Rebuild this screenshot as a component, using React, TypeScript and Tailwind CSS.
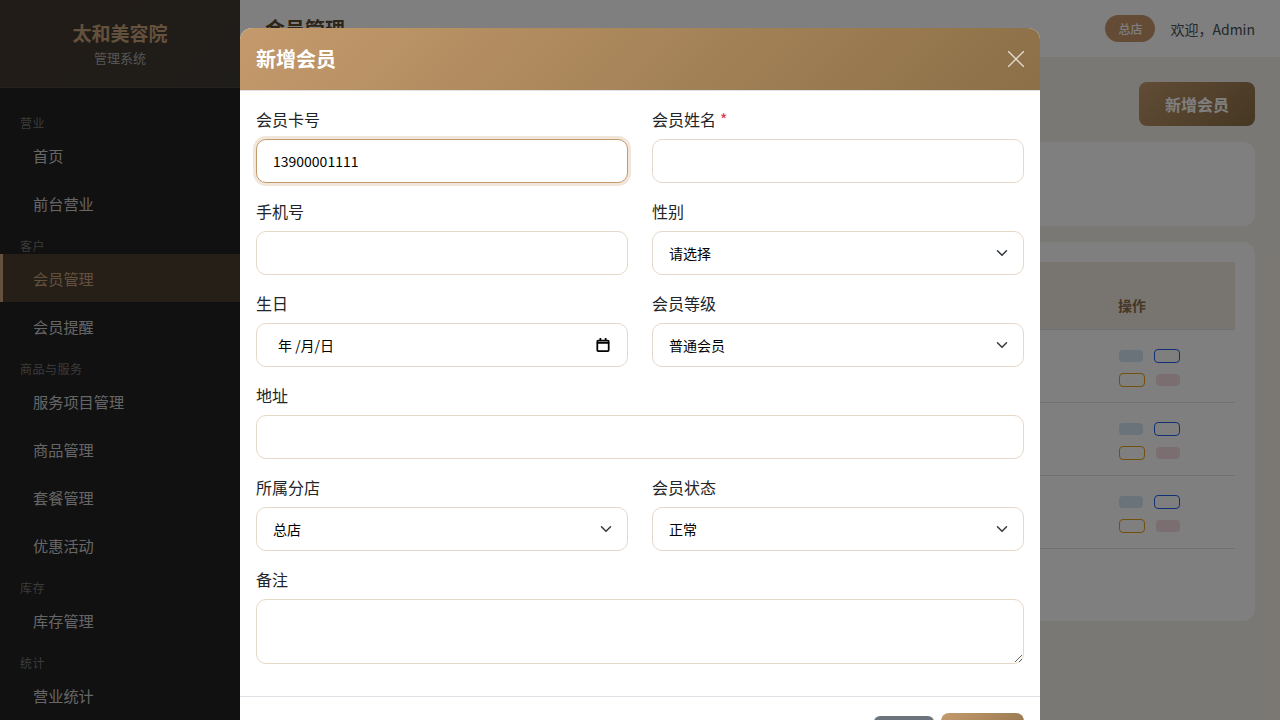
const navGroups: { title: string; items: string[] }[] = [
  { title: "营业", items: ["首页", "前台营业"] },
  { title: "客户", items: ["会员管理", "会员提醒"] },
  { title: "商品与服务", items: ["服务项目管理", "商品管理", "套餐管理", "优惠活动"] },
  { title: "库存", items: ["库存管理"] },
  { title: "统计", items: ["营业统计"] },
];

const font = { fontFamily: '"Noto Sans CJK SC", "Noto Sans", sans-serif' };

function Field({ label, required, children, full }: { label: string; required?: boolean; children: React.ReactNode; full?: boolean }) {
  return (
    <div className={full ? "col-span-2" : ""}>
      <label className="block h-[24px] mb-2 text-base leading-[24px] text-[#212529]">
        {label}
        {required && <span className="text-[#dc3545] ml-1">*</span>}
      </label>
      {children}
    </div>
  );
}

const inputCls =
  "block w-full h-[44px] rounded-[10px] border border-[#e5d8c8] bg-white px-4 text-sm text-black outline-none";

function Select({ value }: { value: string }) {
  return (
    <div className={inputCls + " flex items-center justify-between !pr-[15px]"}>
      <span>{value}</span>
      <svg width="12" height="12" viewBox="0 0 16 16" fill="none" stroke="#343a40" strokeWidth="2" strokeLinecap="round" strokeLinejoin="round">
        <path d="m2 5 6 6 6-6" />
      </svg>
    </div>
  );
}

function Row({ date }: { date: string }) {
  return (
    <div className="flex h-[73px] border-b border-[#dee2e6] text-base text-[#212529]">
      <div className="flex-1 flex items-center justify-end pr-[156px]">{date}</div>
      <div className="w-[117px] pt-[19px] pl-0">
        <div className="flex items-center gap-[11px] h-[14px] ml-[1px]">
          <span className="w-[24px] h-[12px] rounded-[4px] bg-[#d4e4f4]" />
          <span className="w-[26px] h-[14px] rounded-[4px] border border-[#2563eb]" />
        </div>
        <div className="flex items-center gap-[11px] h-[14px] mt-[10px] ml-[1px]">
          <span className="w-[26px] h-[14px] rounded-[4px] border border-[#e8a317]" />
          <span className="w-[24px] h-[12px] rounded-[4px] bg-[#f6dde0]" />
        </div>
      </div>
    </div>
  );
}

export default function App() {
  return (
    <div className="relative flex h-screen w-full overflow-hidden bg-[#f5f0e8]" style={font}>
      <aside className="w-[240px] shrink-0 bg-[#222222] text-white overflow-hidden">
        <div className="h-[88px] border-b border-[#4a443c] bg-[linear-gradient(135deg,#44382e,#3e3a34)] pt-[20px] text-center">
          <div className="text-[19px] leading-[26px] font-bold text-[#c8a27a]">太和美容院</div>
          <div className="mt-[3px] text-[13px] leading-[18px] text-[#aaaaaa]">管理系统</div>
        </div>
        <nav className="pt-[16px]">
          {navGroups.map((g) => (
            <div key={g.title}>
              <div className="h-[33px] pl-[20px] pt-[11px] text-xs leading-[16px] tracking-[0.5px] text-[#777777] first:h-auto">{g.title}</div>
              {g.items.map((it) => (
                <div
                  key={it}
                  className={
                    "h-[48px] flex items-center pl-[30px] text-[15.2px] border-l-[3px] " +
                    (it === "会员管理"
                      ? "border-[#c8a27a] bg-[#4a3e30] text-[#c8a27a]"
                      : "border-transparent text-[#cccccc]")
                  }
                >
                  {it}
                </div>
              ))}
            </div>
          ))}
        </nav>
      </aside>

      <main className="flex-1 min-w-0 flex flex-col">
        <header className="h-[57px] shrink-0 bg-white flex items-center justify-between px-[25px]">
          <h1 className="text-[20px] font-bold text-[#5c4a32]">会员管理</h1>
          <div className="flex items-center gap-[15px]">
            <span className="h-[27px] w-[50px] flex items-center justify-center rounded-full bg-[#c8966a] text-xs font-medium text-white">总店</span>
            <span className="text-sm text-[#495057]">欢迎，Admin</span>
          </div>
        </header>
        <div className="flex-1 px-[25px] pt-[25px]">
          <div className="flex justify-end h-[44px]">
            <button className="w-[116px] rounded-[8px] bg-[linear-gradient(135deg,#c49a6c,#8b6f47)] text-base font-bold text-white">新增会员</button>
          </div>
          <div className="mt-[16px] h-[84px] rounded-[12px] bg-white" />
          <div className="mt-[16px] h-[379px] rounded-[12px] bg-white p-[20px]">
            <div className="flex h-[68px] items-end border-b border-[#dee2e6] bg-[#f1ebe2] pb-[14px] text-sm font-bold text-[#8b6f47]">
              <div className="flex-1 pr-[162px] text-right">注册时间</div>
              <div className="w-[117px]">操作</div>
            </div>
            <Row date="2026/4/5" />
            <Row date="2026/4/15" />
            <Row date="2026/4/25" />
          </div>
        </div>
      </main>

      <div className="absolute inset-0 flex justify-center overflow-hidden bg-black/50">
        <div className="mt-[28px] w-[800px] h-max rounded-[12px] bg-white overflow-hidden">
          <div className="flex h-[63px] items-center justify-between border-b border-[#dee2e6] bg-[linear-gradient(135deg,#c49a6c,#8b6f47)] pl-[16px] pr-[16px]">
            <h5 className="text-[20px] leading-[24px] font-bold text-white">新增会员</h5>
            <svg width="16" height="16" viewBox="0 0 16 16" fill="none" stroke="#ffffff" strokeOpacity="0.75" strokeWidth="1.3">
              <path d="M0 0 16 16M16 0 0 16" />
            </svg>
          </div>
          <div className="p-[16px] pt-[16px] pb-[32px] grid grid-cols-2 gap-x-[24px] gap-y-[16px]">
            <Field label="会员卡号">
              <div className={inputCls + " !border-[#c49a6c] flex items-center shadow-[0_0_0_3px_rgba(196,154,108,0.25)]"}>13900001111</div>
            </Field>
            <Field label="会员姓名" required><div className={inputCls} /></Field>
            <Field label="手机号"><div className={inputCls} /></Field>
            <Field label="性别"><Select value="请选择" /></Field>
            <Field label="生日">
              <div className={inputCls + " flex items-center justify-between !pl-[21px] !pr-[17px]"}>
                <span className="text-[14px]">年 /月/日</span>
                <svg width="14" height="14" viewBox="0 0 16 16" fill="none" stroke="#000" strokeWidth="2">
                  <rect x="1.5" y="3" width="13" height="12" rx="1" />
                  <path d="M1 5.5h14M5 0v3M11 0v3" />
                </svg>
              </div>
            </Field>
            <Field label="会员等级"><Select value="普通会员" /></Field>
            <Field label="地址" full><div className={inputCls} /></Field>
            <Field label="所属分店"><Select value="总店" /></Field>
            <Field label="会员状态"><Select value="正常" /></Field>
            <Field label="备注" full>
              <textarea className="block w-full h-[65px] rounded-[10px] border border-[#e5d8c8] bg-white px-4 outline-none" />
            </Field>
          </div>
          <div className="flex justify-end gap-[7px] border-t border-[#dee2e6] px-[16px] pt-[16px] pb-[16px]">
            <button className="mt-[3px] h-[38px] w-[60px] rounded-[6px] bg-[#6c757d] text-sm text-white">取消</button>
            <button className="h-[44px] w-[83px] rounded-[8px] bg-[linear-gradient(135deg,#c49a6c,#8b6f47)] text-sm text-white">保存</button>
          </div>
        </div>
      </div>
    </div>
  );
}
